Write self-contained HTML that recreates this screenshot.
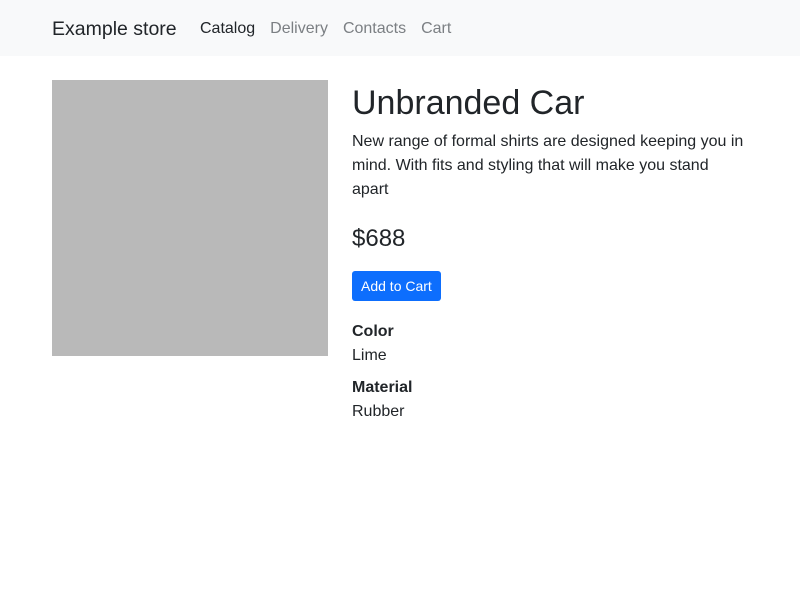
<!DOCTYPE html>
<html><head><style>
*{box-sizing:border-box;margin:0;padding:0}
body{width:800px;height:600px;background:#fff;font-family:"Liberation Sans",sans-serif;color:#212529;font-size:16px;line-height:1.5;position:relative}
nav{height:56px;background:#f8f9fa;position:relative}
.brand{position:absolute;left:52px;top:16px;font-size:19.5px;line-height:26px;color:#212529}
.links{position:absolute;left:200px;top:17px;font-size:16px;line-height:24px}
.links span{margin-right:15px;color:#7b7f83}
.links span.a{color:#212529}
.img{position:absolute;left:52px;top:80px;width:276px;height:276px;background:#b9b9b9}
.c{position:absolute;left:352px;top:81px;width:420px}
h1{font-size:34px;font-weight:500;line-height:44px;margin-bottom:5px}
p{font-size:16px;line-height:24px;white-space:nowrap}
.price{font-size:24px;line-height:30px;margin-top:22px}
.btn{display:inline-block;margin-top:17px;background:#0d6efd;color:#fff;font-size:14px;line-height:20px;padding:5px 9px;border-radius:3px}
b{display:block;font-weight:700;margin-top:19px;line-height:24px}
.v{line-height:24px}
.v+b{margin-top:8px}
</style></head><body>
<nav><div class="brand">Example store</div><div class="links"><span class="a">Catalog</span><span>Delivery</span><span>Contacts</span><span>Cart</span></div></nav>
<div class="img"></div>
<div class="c">
<h1>Unbranded Car</h1>
<p>New range of formal shirts are designed keeping you in<br>mind. With fits and styling that will make you stand<br>apart</p>
<div class="price">$688</div>
<div class="btn">Add to Cart</div>
<b>Color</b><div class="v">Lime</div>
<b>Material</b><div class="v">Rubber</div>
</div>
</body></html>
